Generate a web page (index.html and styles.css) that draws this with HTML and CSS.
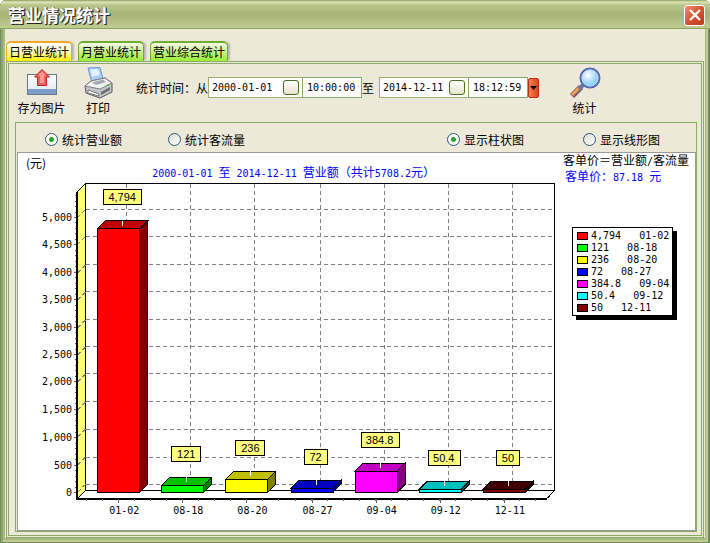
FILE: index.html
```html
<!DOCTYPE html>
<html lang="zh-CN">
<head>
  <meta charset="UTF-8">
  <meta name="viewport" content="width=device-width, initial-scale=1.0">
  <title>营业情况统计</title>
  <link rel="stylesheet" href="styles.css">
</head>
<body>
  <div class="window">
    <header class="titlebar">
      <h1>营业情况统计</h1>
      <button type="button" class="close" aria-label="关闭">
        <svg width="12" height="12" viewBox="0 0 12 12"><path d="M1 1L11 11M11 1L1 11" stroke="#fff" stroke-width="2.4"/></svg>
      </button>
    </header>

    <main class="content">
      <nav class="tabs">
        <button type="button" class="tab active">日营业统计</button>
        <button type="button" class="tab">月营业统计</button>
        <button type="button" class="tab">营业综合统计</button>
      </nav>

      <section class="page">
        <form class="toolbar">
          <button type="button" class="tool">
            <svg width="32" height="32" viewBox="0 0 32 32">
              <defs>
                <linearGradient id="tray" x1="0" y1="0" x2="0" y2="1"><stop offset="0" stop-color="#fff"/><stop offset="1" stop-color="#dfe6f0"/></linearGradient>
              </defs>
              <rect x="1.5" y="7.5" width="29" height="20" fill="url(#tray)" stroke="#6d7688"/>
              <rect x="2" y="22" width="28" height="5" fill="#7d9cc8"/>
              <path d="M16 2.5L23.500 10H20.500V18.500H11.500V10H8.500Z" fill="#f0605c" stroke="#c81e1e"/>
              <path d="M16 4.5L20 8.5H18V16H14V8.5H12Z" fill="#f99a94"/>
            </svg>
            <span>存为图片</span>
          </button>
          <button type="button" class="tool print">
            <svg width="32" height="32" viewBox="0 0 32 32">
              <path d="M6 1L18 0.500L21 12L10 16Z" fill="#a9cbfa" stroke="#6f8fd0"/>
              <path d="M8 2.500L16 2L18 8L10 10Z" fill="#e4f0ff"/>
              <path d="M3 19L9 14L23 11L30 16V25L18 31L4 26Z" fill="#c4c5c8" stroke="#55585e"/>
              <path d="M3 19L9 14L23 11L30 16L18 22Z" fill="#f2f2f2" stroke="#7b7e84"/>
              <path d="M10 15.500L21 12.500L24 15L14 18Z" fill="#a4a7ac"/>
              <path d="M6 23L17 27V29L6 26Z" fill="#fff" stroke="#777"/>
              <path d="M19 25L28 20V23L19 28Z" fill="#6a6d72"/>
              <rect x="25" y="17" width="2" height="2" fill="#5fbf4a"/>
            </svg>
            <span>打印</span>
          </button>
          <div class="period">
            <label for="from">统计时间：从</label>
            <span class="datebox date-from"><input id="from" type="text" value="2000-01-01"><button type="button" class="pick" aria-label="选择开始日期"></button></span>
            <input class="time" type="text" value="10:00:00" aria-label="开始时间">
            <label for="to" class="to">至</label>
            <span class="datebox"><input id="to" type="text" value="2014-12-11"><button type="button" class="pick" aria-label="选择结束日期"></button></span>
            <input class="time" type="text" value="18:12:59" aria-label="结束时间">
            <button type="button" class="drop" aria-label="下拉">
              <svg width="7" height="4" viewBox="0 0 7 4"><path d="M0 0H7L3.5 4Z"/></svg>
            </button>
          </div>
          <button type="submit" class="tool search">
            <svg width="32" height="32" viewBox="0 0 32 32">
              <defs>
                <radialGradient id="lens" cx="0.4" cy="0.35"><stop offset="0" stop-color="#fff"/><stop offset="1" stop-color="#8fcdfb"/></radialGradient>
              </defs>
              <path d="M3 29L12 20" stroke="#7c5a6a" stroke-width="6"/>
              <path d="M3 28L11 20" stroke="#f3a24d" stroke-width="3"/>
              <path d="M10 22L14 18" stroke="#6f78a8" stroke-width="4"/>
              <circle cx="21" cy="11" r="9.5" fill="url(#lens)" stroke="#5468b4" stroke-width="2"/>
              <circle cx="21" cy="11" r="8" fill="none" stroke="#c4dbf8"/>
            </svg>
            <span>统计</span>
          </button>
        </form>

        <div class="panel">
          <div class="options">
            <label><input type="radio" name="kind" checked>统计营业额</label>
            <label><input type="radio" name="kind">统计客流量</label>
            <label><input type="radio" name="view" checked>显示柱状图</label>
            <label><input type="radio" name="view">显示线形图</label>
          </div>
          <div class="report">
            <svg id="chart" class="chart" viewBox="0 0 544 376"></svg>
            <aside class="side">
              <p>客单价＝营业额<span class="num">/</span>客流量</p>
              <p class="average">客单价：<span class="num">87.18 </span>元</p>
              <ul id="legend" class="legend num"></ul>
            </aside>
          </div>
        </div>
      </section>
    </main>
  </div>
  <script src="chart.js"></script>
</body>
</html>
```
FILE: styles.css
```css
* {
  box-sizing: border-box;
}
body {
  margin: 0;
  font-family: "Noto Sans CJK SC", sans-serif;
  font-size: 12px;
  line-height: 14px;
  color: #000;
}
button, input {
  font: inherit;
  color: inherit;
  margin: 0;
  padding: 0;
}
.num {
  font-family: "DejaVu Sans Mono", monospace;
  font-size: 10px;
}
.window {
  min-height: 100vh;
  display: flex;
  flex-direction: column;
  padding: 0 5px 6px;
  background: #a9ba80;
  border-radius: 6px 6px 0 0;
  box-shadow: inset 1px 0 #6f8f5f, inset -2px -2px #6f8f5f, inset 3px 0 #90a870, inset -4px -4px #c0cc94;
}
.titlebar {
  display: flex;
  align-items: center;
  justify-content: space-between;
  height: 29px;
  margin: 0 -5px;
  padding: 2px 5px 0 8px;
  border-bottom: 1px solid #8fa365;
  border-radius: 6px 6px 0 0;
  background: linear-gradient(#8a9f60 0, #dfe6b8 2px, #b9c58c 5px, #a5b478 14px, #c0cc92 100%);
}
h1 {
  margin: 0;
  font-size: 17px;
  line-height: 24px;
  color: #fff;
  text-shadow: 1px 1px #222, 1px 0 #444;
}
.close {
  display: grid;
  place-items: center;
  width: 21px;
  height: 21px;
  border: 1px solid #fff;
  border-radius: 3px;
  background: linear-gradient(135deg, #ea9274, #d8532f 50%, #b83a1c);
}
.content {
  flex: 1;
  display: flex;
  flex-direction: column;
  padding: 12px 1px 0;
  background: #ece9d8;
}
.tabs {
  display: flex;
  gap: 6px;
}
.tab {
  height: 20px;
  padding: 0 2px;
  border: 1px solid #6fae2c;
  border-top-width: 2px;
  border-bottom: 0;
  border-radius: 5px 5px 0 0;
  background: linear-gradient(#f4fbe4, #c8ee88 50%, #9aee30);
  box-shadow: 3px 0 2px -1px #b9b6a8;
}
.tab.active {
  border-color: #f5a623;
  background: linear-gradient(#fff, #fff6b0 50%, #fff200);
}
.page {
  flex: 1;
  display: flex;
  flex-direction: column;
  padding: 0 4px 3px 6px;
  border: 3px double #8aab6c;
}
.toolbar {
  display: flex;
  align-items: flex-start;
  height: 58px;
  padding-top: 3px;
}
.tool {
  display: flex;
  flex-direction: column;
  align-items: center;
  gap: 2px;
  width: 53px;
  border: 0;
  background: none;
}
.print {
  width: 60px;
}
.search {
  margin-left: 19px;
}
.period {
  display: flex;
  align-items: center;
  padding: 10px 0 0 8px;
}
.datebox {
  display: flex;
  align-items: center;
  width: 90px;
  height: 21px;
  padding: 0 3px;
  border: 1px solid #a3ad6c;
  background: #fff;
}
.date-from {
  width: 95px;
}
.datebox input {
  flex: 1;
  min-width: 0;
  border: 0;
  background: none;
  font: 10px "DejaVu Sans Mono", monospace;
}
.pick {
  width: 16px;
  height: 15px;
  border: 1px solid #44701f;
  border-radius: 3px;
  background: linear-gradient(#fff, #e8e2cc);
}
.time {
  width: 60px;
  height: 21px;
  margin-left: -1px;
  padding: 0 4px;
  border: 1px solid #86ab6c;
  background: #fff;
  font: 10px "DejaVu Sans Mono", monospace;
}
.to {
  padding-right: 5px;
}
.drop {
  display: grid;
  place-items: center;
  width: 11px;
  height: 20px;
  border: 1px solid #b8300c;
  border-radius: 2px;
  background: linear-gradient(90deg, #f08058, #e04418);
}
.panel {
  flex: 1;
  display: flex;
  flex-direction: column;
  padding-left: 1px;
  border: 1px solid #86ab6c;
}
.options {
  display: grid;
  grid-template-columns: 123px 1fr 136px 113px;
  align-items: center;
  height: 29px;
  padding: 4px 0 0 28px;
}
.options label {
  display: flex;
  align-items: center;
  gap: 4px;
}
.options input {
  appearance: none;
  width: 13px;
  height: 13px;
  border: 1px solid #2a5578;
  border-radius: 50%;
  background: linear-gradient(135deg, #dcdcd4, #fff);
}
.options input:checked {
  background: radial-gradient(circle, #22a822 2px, #fff 3px);
}
.report {
  flex: 1;
  display: flex;
  align-items: flex-start;
  border: 1px solid #9a9a9a;
  background: #fff;
}
.chart {
  flex: 1;
  min-width: 0;
}
.chart text {
  font-size: 12px;
}
.chart .num {
  font-size: 10px;
}
.chart .mark {
  font: 11px "Liberation Sans", sans-serif;
  text-anchor: middle;
}
.chart .value {
  text-anchor: end;
}
.chart .day {
  text-anchor: middle;
}
.chart .caption {
  fill: #00f;
}
.grid {
  stroke: #808080;
  stroke-dasharray: 4 3;
}
.tick {
  stroke: #606060;
}
.side {
  width: 132px;
}
.side p {
  margin: 0;
  white-space: pre;
}
.side .average {
  padding-left: 2px;
  color: #00f;
}
.legend {
  width: 101px;
  margin: 42px 0 0 9px;
  padding: 2px 0 1px 4px;
  list-style: none;
  line-height: 12px;
  white-space: pre;
  border: 1px solid #000;
  background: #fff;
  box-shadow: 4px 4px #000;
}
.legend li {
  display: flex;
  align-items: center;
  gap: 3px;
}
.swatch {
  width: 11px;
  height: 8px;
  border: 1px solid #000;
}
```
FILE: chart.js
```js
const days = [
  { day: '01-02', total: 4794, front: '#ff0000', top: '#c00000', side: '#800000' },
  { day: '08-18', total: 121, front: '#00ff00', top: '#00c000', side: '#008000' },
  { day: '08-20', total: 236, front: '#ffff00', top: '#c0c000', side: '#808000' },
  { day: '08-27', total: 72, front: '#0000ff', top: '#0000c0', side: '#000080' },
  { day: '09-04', total: 384.8, front: '#ff00ff', top: '#c000c0', side: '#800080' },
  { day: '09-12', total: 50.4, front: '#00ffff', top: '#00c0c0', side: '#008080' },
  { day: '12-11', total: 50, front: '#800000', top: '#400000', side: '#200000' },
];

const base = 338;
const depth = 8;
const barWidth = 42;
const y = (value) => Math.round(base - value * 274 / 5000);
const left = (i) => Math.round(79 + i * 64.2);
const line = (x1, y1, x2, y2, attrs) => `<line x1="${x1}" y1="${y1}" x2="${x2}" y2="${y2}" ${attrs}/>`;

let shapes = '';
let labels = '';

// walls and floor
shapes += '<path d="M59 38L67 30V336L59 344Z" fill="#ffff80" stroke="#000"/>';
shapes += '<path d="M67 30H535V336H67ZM535 336L528 344" fill="none" stroke="#000"/>';

for (let v = 0; v <= 5000; v += 500) {
  shapes += line(67, y(v) - depth, 535, y(v) - depth, 'class="grid"');
  shapes += line(59, y(v), 67, y(v) - depth, 'class="grid"');
  shapes += line(55, y(v), 59, y(v), 'class="tick"');
  labels += `<text class="num value" x="54" y="${y(v) + 4}">${v.toLocaleString('en-US')}</text>`;
}
for (let v = 100; v < 5500; v += 100) {
  shapes += line(56, y(v), 59, y(v), 'class="tick"');
}

days.forEach((d, i) => {
  const x = left(i) + 29;
  shapes += line(x, 30, x, 336, 'class="grid"');
});

shapes += '<path d="M58.5 38V344.5H528" fill="none" stroke="#000" stroke-width="2"/>';

for (let x = 68; x < 520; x += 16) {
  shapes += line(x, 345, x, 347, 'class="tick"');
}

days.forEach((d, i) => {
  const x = left(i);
  const r = x + barWidth;
  const t = y(d.total);
  const mid = x + 25;
  const text = d.total.toLocaleString('en-US');
  const w = text.replace(/[.,]/, '').length * 6 + (/[.,]/.test(text) ? 14 : 11);

  shapes += `<rect x="${x}" y="${t}" width="${barWidth}" height="${base - t}" fill="${d.front}" stroke="#000"/>`;
  shapes += `<path d="M${x} ${t}l${depth} -${depth}h${barWidth}l-${depth} ${depth}z" fill="${d.top}" stroke="#000"/>`;
  shapes += `<path d="M${r} ${t}l${depth} -${depth}V${base - depth}L${r} ${base}z" fill="${d.side}" stroke="#000"/>`;
  shapes += line(mid, t - 8, mid, t - 3, 'stroke="#fff"');
  shapes += line(x + 21, 345, x + 21, 349, 'class="tick"');
  shapes += `<rect x="${mid - Math.round(w / 2)}" y="${t - 39}" width="${w}" height="15" fill="#ffff80" stroke="#000"/>`;
  labels += `<text class="mark" x="${mid}" y="${t - 27}">${text}</text>`;
  labels += `<text class="num day" x="${x + 27}" y="360">${d.day}</text>`;
});

labels += '<text x="8" y="15">(元)</text>';
labels += '<text class="caption" x="134" y="24"><tspan class="num">2000-01-01 </tspan>至<tspan class="num"> 2014-12-11 </tspan>营业额（共计<tspan class="num">5708.2</tspan>元）</text>';

document.getElementById('chart').innerHTML =
  `<g transform="translate(0.5 0.5)" shape-rendering="crispEdges">${shapes}</g>${labels}`;

document.getElementById('legend').innerHTML = days.map((d) =>
  `<li><span class="swatch" style="background:${d.front}"></span>${d.total.toLocaleString('en-US')}   ${d.day}</li>`
).join('');
```
